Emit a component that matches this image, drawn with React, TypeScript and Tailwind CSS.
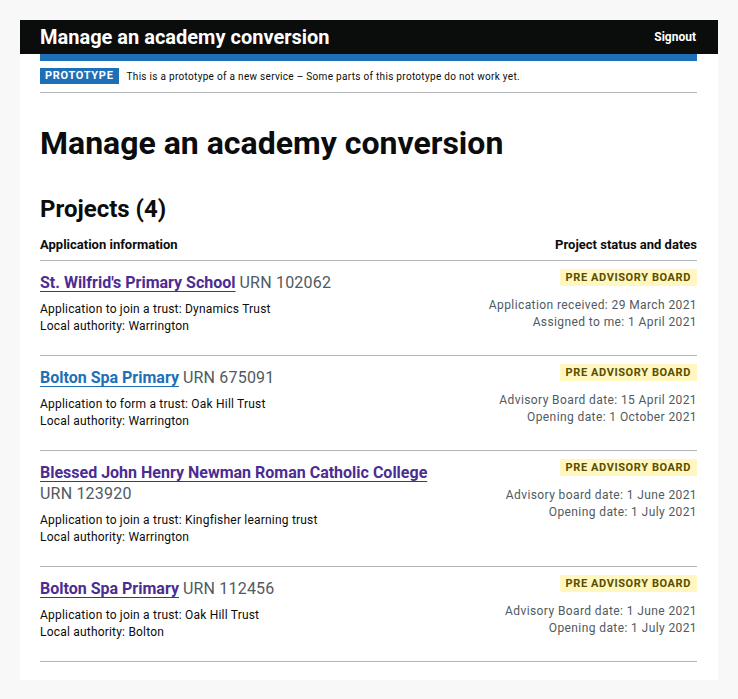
import React from "react";

type Project = {
  name: string;
  urn: string;
  visited: boolean;
  application: string;
  authority: string;
  dates: string[];
};

const projects: Project[] = [
  {
    name: "St. Wilfrid's Primary School",
    urn: "102062",
    visited: true,
    application: "Application to join a trust: Dynamics Trust",
    authority: "Local authority: Warrington",
    dates: ["Application received: 29 March 2021", "Assigned to me: 1 April 2021"],
  },
  {
    name: "Bolton Spa Primary",
    urn: "675091",
    visited: false,
    application: "Application to form a trust: Oak Hill Trust",
    authority: "Local authority: Warrington",
    dates: ["Advisory Board date: 15 April 2021", "Opening date: 1 October 2021"],
  },
  {
    name: "Blessed John Henry Newman Roman Catholic College",
    urn: "123920",
    visited: true,
    application: "Application to join a trust: Kingfisher learning trust",
    authority: "Local authority: Warrington",
    dates: ["Advisory board date: 1 June 2021", "Opening date: 1 July 2021"],
  },
  {
    name: "Bolton Spa Primary",
    urn: "112456",
    visited: true,
    application: "Application to join a trust: Oak Hill Trust",
    authority: "Local authority: Bolton",
    dates: ["Advisory Board date: 1 June 2021", "Opening date: 1 July 2021"],
  },
];

function ProjectRow({ project }: { project: Project }) {
  return (
    <div className="flex justify-between items-start border-b border-[#b1b4b6] pt-[8px] pb-[20px]">
      <div className="w-[400px] pt-[3px]">
        <p className="text-[16px] leading-[21px]">
          <a
            href="#"
            className={
              project.visited
                ? "font-bold text-[#4c2c92] underline underline-offset-[3px] decoration-1"
                : "font-bold text-[#1d70b8] underline underline-offset-[3px] decoration-1"
            }
          >
            {project.name}
          </a>{" "}
          <span className="text-[#505a5f] tracking-[0.2px]">URN {project.urn}</span>
        </p>
        <p className="mt-[8px] text-[12px] leading-[17px] tracking-[0.2px] text-[#0b0c0c]">{project.application}</p>
        <p className="text-[12px] leading-[17px] tracking-[0.2px] text-[#0b0c0c]">{project.authority}</p>
      </div>
      <div className="flex flex-col items-end">
        <span className="bg-[#fff7bf] text-[#594d00] font-bold text-[11px] leading-[17px] tracking-[0.6px] px-[6px]">
          PRE ADVISORY BOARD
        </span>
        <div className="mt-[11px] text-right text-[12px] leading-[17px] tracking-[0.4px] text-[#505a5f]">
          {project.dates.map((d) => (
            <p key={d}>{d}</p>
          ))}
        </div>
      </div>
    </div>
  );
}

export default function App() {
  return (
    <div
      className="min-h-[699px] bg-[#f8f8f8] p-[20px]"
      style={{ fontFamily: "Roboto, 'Noto Sans', sans-serif" }}
    >
      <div className="bg-white pb-[18px]">
        <header className="bg-[#0b0c0c] h-[34px] flex items-center justify-between pl-[20px] pr-[22px]">
          <span className="text-white font-bold text-[20px] leading-none">Manage an academy conversion</span>
          <span className="text-white font-bold text-[12px]">Signout</span>
        </header>
        <div className="ml-[20px] mr-[21px] h-[7px] bg-[#1d70b8]" />
        <div className="ml-[20px] mr-[21px] flex items-center gap-[8px] pt-[7px] pb-[8px] border-b border-[#b1b4b6]">
          <span className="bg-[#1d70b8] text-white font-bold text-[11px] leading-[16px] tracking-[0.7px] px-[5px]">
            PROTOTYPE
          </span>
          <span className="text-[10px] tracking-[0.3px] text-[#0b0c0c]">
            This is a prototype of a new service – Some parts of this prototype do not work yet.
          </span>
        </div>
        <main className="pl-[20px] pr-[21px]">
          <h1 className="mt-[30px] text-[32px] leading-[40px] font-bold text-[#0b0c0c]">
            Manage an academy conversion
          </h1>
          <h2 className="mt-[31px] text-[24px] leading-[30px] font-bold text-[#0b0c0c]">Projects (4)</h2>
          <div className="mt-[12px] flex justify-between border-b border-[#b1b4b6] pb-[6px] text-[13px] leading-[18px] font-bold text-[#0b0c0c]">
            <span>Application information</span>
            <span>Project status and dates</span>
          </div>
          {projects.map((p) => (
            <ProjectRow key={p.urn} project={p} />
          ))}
        </main>
      </div>
    </div>
  );
}
